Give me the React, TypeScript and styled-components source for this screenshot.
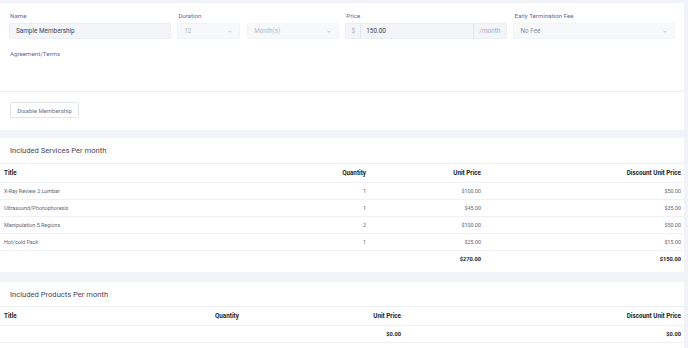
import React from "react";
import styled, { createGlobalStyle } from "styled-components";

const GlobalStyle = createGlobalStyle`
  html, body { margin: 0; padding: 0; }
  body {
    background: #f2f3f8;
    font-family: Roboto, "Liberation Sans", sans-serif;
  }
  * { box-sizing: border-box; }
`;

const Page = styled.div`
  display: flex;
  flex-direction: column;
  padding: 3px 4px 0 0;
  width: 688px;
`;

const Card = styled.div<{ $mt?: number }>`
  background: #ffffff;
  display: flex;
  flex-direction: column;
  margin-top: ${(p) => p.$mt || 0}px;
`;

const FormSection = styled.div`
  padding: 9px 9px 0 9px;
  height: 89px;
  border-bottom: 1px solid #ebedf2;
`;

const FormGrid = styled.div`
  display: grid;
  grid-template-columns: repeat(4, 1fr);
  column-gap: 6.5px;
`;

const Field = styled.div`
  display: flex;
  flex-direction: column;
`;

const Label = styled.label`
  font-size: 6.2px;
  line-height: 8px;
  color: #646c9a;
  margin-bottom: 3px;
  margin-left: 1px;
`;

const InputBox = styled.div<{ $flex?: string }>`
  display: flex;
  align-items: center;
  height: 16px;
  background: #f4f5f9;
  border: 1px solid #ebedf2;
  border-radius: 2px;
  flex: ${(p) => p.$flex || "1"};
  font-size: 6.4px;
  color: #3f4254;
  padding: 0 6px;
  min-width: 0;
`;

const SelectBox = styled(InputBox)<{ $muted?: boolean }>`
  justify-content: space-between;
  background: #f7f8fa;
  border-color: #f3f4f7;
  color: ${(p) => (p.$muted ? "#b5b8c8" : "#8a8ea8")};
`;

const Chevron = styled.svg`
  width: 4px;
  height: 3px;
  flex: none;
  margin-right: 1px;
`;

const Row = styled.div`
  display: flex;
  gap: 7px;
`;

const Group = styled.div`
  display: flex;
  height: 16px;
  background: #f4f5f9;
  border: 1px solid #ebedf2;
  border-radius: 2px;
  font-size: 6.4px;
`;

const Addon = styled.span<{ $w: number; $side: "l" | "r" }>`
  width: ${(p) => p.$w}px;
  display: flex;
  align-items: center;
  justify-content: center;
  color: #a7abc3;
  ${(p) =>
    p.$side === "l"
      ? "border-right: 1px solid #e4e6ef;"
      : "border-left: 1px solid #e4e6ef;"}
`;

const GroupValue = styled.span`
  flex: 1;
  display: flex;
  align-items: center;
  padding-left: 5px;
  color: #3f4254;
`;

const TermsLabel = styled(Label)`
  display: block;
  margin-top: 11px;
`;

const Footer = styled.div`
  display: flex;
  align-items: flex-start;
  padding: 10px 10px;
  height: 38px;
`;

const Button = styled.button`
  height: 16px;
  width: 69px;
  padding: 0;
  background: #ffffff;
  border: 1px solid #e2e5ec;
  border-radius: 2px;
  font-family: inherit;
  font-size: 6px;
  color: #6c7293;
`;

const CardHead = styled.div<{ $h: number }>`
  height: ${(p) => p.$h}px;
  display: flex;
  align-items: center;
  padding-left: 10px;
  border-bottom: 1px solid #ebedf2;
  font-size: 7.6px;
  color: #48465b;
`;

const Table = styled.table`
  width: 100%;
  border-collapse: collapse;
  table-layout: fixed;
  font-size: 5.4px;
`;

const Th = styled.th<{ $w?: number; $align?: string }>`
  width: ${(p) => (p.$w ? `${p.$w}px` : "auto")};
  text-align: ${(p) => p.$align || "right"};
  font-weight: 700;
  font-size: 6.3px;
  color: #212529;
  height: 18px;
  padding: 0 3px 0 4px;
  border-bottom: 1px solid #f0f1f5;
`;

const Td = styled.td<{ $align?: string; $bold?: boolean; $h?: number }>`
  text-align: ${(p) => p.$align || "right"};
  color: ${(p) => (p.$bold ? "#212529" : "#636574")};
  font-weight: ${(p) => (p.$bold ? 700 : 400)};
  font-size: ${(p) => (p.$bold ? 5.7 : 5.4)}px;
  height: ${(p) => p.$h || 17}px;
  padding: 0 3px 0 4px;
  border-bottom: 1px solid #f0f1f5;
`;

const TotalTd = styled(Td)`
  border-bottom: none;
`;

const TableWrap = styled.div<{ $pb: number }>`
  padding-bottom: ${(p) => p.$pb}px;
`;

const Down = () => (
  <Chevron viewBox="0 0 8 5">
    <path d="M1 1l3 3 3-3" fill="none" stroke="#a0a4b8" strokeWidth="1.2" />
  </Chevron>
);

const services = [
  ["X-Ray Review 2 Lumbar", "1", "$100.00", "$50.00"],
  ["Ultrasound/Phonophoresis", "1", "$45.00", "$35.00"],
  ["Manipulation 5 Regions", "2", "$100.00", "$50.00"],
  ["Hot/cold Pack", "1", "$25.00", "$15.00"],
];

export default function App() {
  return (
    <>
      <GlobalStyle />
      <Page>
        <Card>
          <FormSection>
            <FormGrid>
              <Field>
                <Label>Name</Label>
                <InputBox>Sample Membership</InputBox>
              </Field>
              <Field>
                <Label>Duration</Label>
                <Row>
                  <SelectBox $flex="0 0 63px" $muted>
                    12 <Down />
                  </SelectBox>
                  <SelectBox $muted>
                    Month(s) <Down />
                  </SelectBox>
                </Row>
              </Field>
              <Field>
                <Label>Price</Label>
                <Group>
                  <Addon $w={15} $side="l">$</Addon>
                  <GroupValue>150.00</GroupValue>
                  <Addon $w={33} $side="r">/month</Addon>
                </Group>
              </Field>
              <Field>
                <Label>Early Termination Fee</Label>
                <SelectBox>
                  No Fee <Down />
                </SelectBox>
              </Field>
            </FormGrid>
            <TermsLabel>Agreement/Terms</TermsLabel>
          </FormSection>
          <Footer>
            <Button>Disable Membership</Button>
          </Footer>
        </Card>

        <Card $mt={8}>
          <CardHead $h={26}>Included Services Per month</CardHead>
          <TableWrap $pb={5}>
            <Table>
              <thead>
                <tr>
                  <Th $align="left">Title</Th>
                  <Th $w={120}>Quantity</Th>
                  <Th $w={115}>Unit Price</Th>
                  <Th $w={200}>Discount Unit Price</Th>
                </tr>
              </thead>
              <tbody>
                {services.map((s) => (
                  <tr key={s[0]}>
                    <Td $align="left">{s[0]}</Td>
                    <Td>{s[1]}</Td>
                    <Td>{s[2]}</Td>
                    <Td>{s[3]}</Td>
                  </tr>
                ))}
                <tr>
                  <TotalTd />
                  <TotalTd />
                  <TotalTd $bold>$270.00</TotalTd>
                  <TotalTd $bold>$150.00</TotalTd>
                </tr>
              </tbody>
            </Table>
          </TableWrap>
        </Card>

        <Card $mt={10}>
          <CardHead $h={25}>Included Products Per month</CardHead>
          <TableWrap $pb={8}>
            <Table>
              <thead>
                <tr>
                  <Th $w={211} $align="left">Title</Th>
                  <Th $align="left">Quantity</Th>
                  <Th $w={160}>Unit Price</Th>
                  <Th $w={280}>Discount Unit Price</Th>
                </tr>
              </thead>
              <tbody>
                <tr>
                  <Td $align="left" />
                  <Td />
                  <Td $bold>$0.00</Td>
                  <Td $bold>$0.00</Td>
                </tr>
              </tbody>
            </Table>
          </TableWrap>
        </Card>
      </Page>
    </>
  );
}
